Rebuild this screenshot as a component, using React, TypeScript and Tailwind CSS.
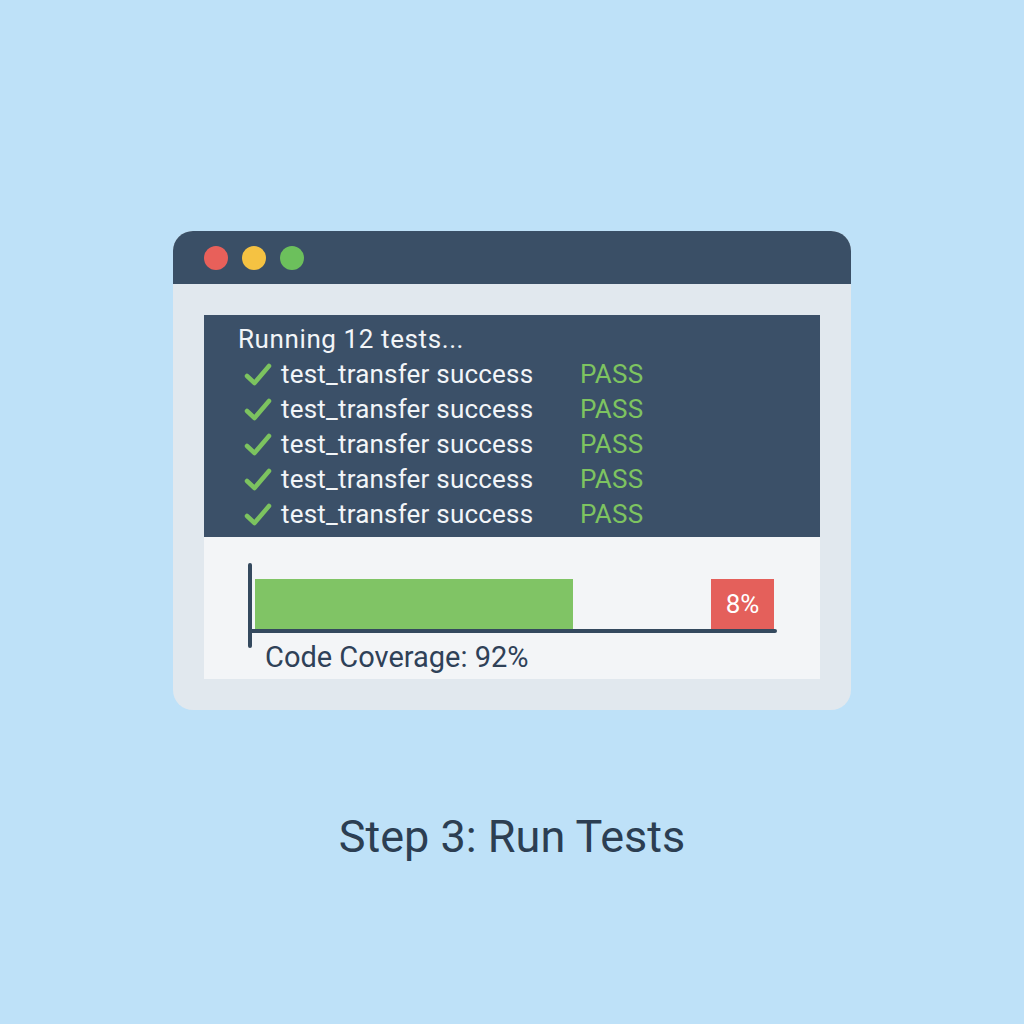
const rows = [1, 2, 3, 4, 5];

const Check = () => (
  <svg width="28" height="24" viewBox="0 0 28 24" className="shrink-0">
    <path
      d="M3 13 L10.5 20 L25 3"
      fill="none"
      stroke="#7cc35f"
      strokeWidth="4.5"
      strokeLinecap="round"
      strokeLinejoin="round"
    />
  </svg>
);

export default function App() {
  return (
    <div
      className="flex min-h-screen w-full flex-col items-center bg-[#bee1f8] pt-[231px]"
      style={{ fontFamily: "Roboto, 'Liberation Sans', sans-serif" }}
    >
      <div className="w-[678px] overflow-hidden rounded-[20px] bg-[#e1e8ee]">
        <div className="flex h-[53px] items-center gap-[14px] bg-[#3a4f66] pl-[31px]">
          <div className="h-6 w-6 rounded-full bg-[#e8605a]"></div>
          <div className="h-6 w-6 rounded-full bg-[#f5c242]"></div>
          <div className="h-6 w-6 rounded-full bg-[#6cc05c]"></div>
        </div>
        <div className="p-[31px]">
          <div className="h-[222px] bg-[#3b5068] pl-[34px] pt-[7px] text-[26px] leading-[35px] tracking-[0.2px] text-[#f2f5f8]">
            <p className="tracking-[0.6px]">Running 12 tests...</p>
            {rows.map((r) => (
              <div key={r} className="flex items-center">
                <div className="ml-[6px] mr-[9px] flex items-center">
                  <Check />
                </div>
                <span className="w-[299px]">test_transfer success</span>
                <span className="text-[#7ec460]">PASS</span>
              </div>
            ))}
          </div>
          <div className="h-[142px] bg-[#f3f5f7] pl-[44px] pt-[26px]">
            <div className="flex items-start">
              <div className="h-[85px] w-[4px] rounded-full bg-[#34495e]"></div>
              <div className="flex flex-col">
                <div className="flex h-[66px] w-[525px] items-end justify-between">
                  <div className="ml-[3px] h-[50px] w-[318px] bg-[#80c465]"></div>
                  <div className="mr-[3px] flex h-[50px] w-[63px] items-center justify-center bg-[#e4605b] text-[26px] text-white">
                    8%
                  </div>
                </div>
                <div className="h-[4px] w-[525px] rounded-r-full bg-[#34495e]"></div>
                <p className="ml-[13px] mt-[7px] text-[29px] leading-[34px] text-[#2f4157]">
                  Code Coverage: 92%
                </p>
              </div>
            </div>
          </div>
        </div>
      </div>
      <h1 className="mt-[100px] text-[45px] leading-[54px] text-[#2c3e52]">
        Step 3: Run Tests
      </h1>
    </div>
  );
}
